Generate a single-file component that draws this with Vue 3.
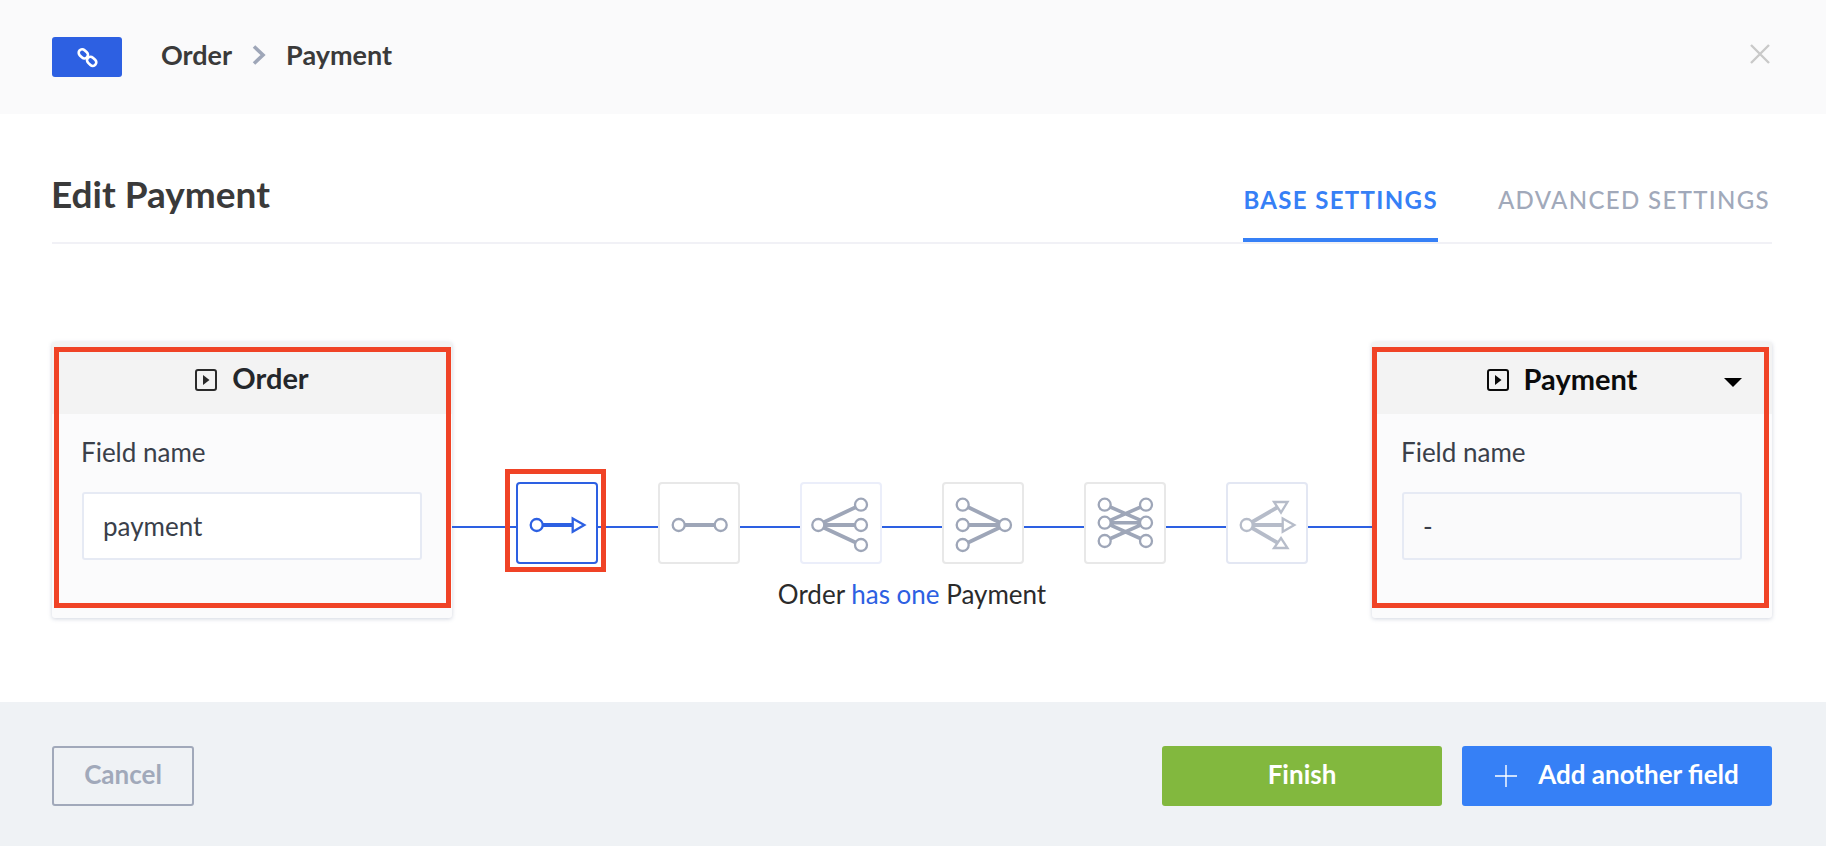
<script setup>
const leftRows = [22.7, 43, 63]
</script>

<template>
  <div class="page">
    <header class="top">
      <div class="badge">
        <svg width="21" height="21" viewBox="0 0 24 24" fill="none" stroke="#fff" stroke-width="3">
          <rect x="1.5" y="3.8" width="11.5" height="8" rx="4" transform="rotate(42 7.2 7.8)" />
          <rect x="11" y="12.4" width="11.5" height="8" rx="4" transform="rotate(42 16.8 16.4)" />
        </svg>
      </div>
      <span class="crumb">Order</span>
      <svg class="chev" width="14" height="20" viewBox="0 0 14 20" fill="none" stroke="#9ea6b8" stroke-width="3.6">
        <path d="M2 1.5 11 10 2 18.5" />
      </svg>
      <span class="crumb">Payment</span>
      <svg class="close" width="20" height="20" viewBox="0 0 20 20" stroke="#c9c9c9" stroke-width="2.4">
        <path d="M1 1 19 19M19 1 1 19" />
      </svg>
    </header>

    <main class="main">
      <div class="title-row">
        <h1>Edit Payment</h1>
        <nav class="tabs">
          <span class="tab active">BASE SETTINGS</span>
          <span class="tab">ADVANCED SETTINGS</span>
        </nav>
      </div>

      <div class="diagram">
        <section class="card">
          <div class="card-head">
            <svg width="22" height="22" viewBox="0 0 22 22">
              <rect x="1" y="1" width="20" height="20" rx="2" fill="none" stroke="#2b2b2b" stroke-width="2" />
              <path d="M8 6 14.5 11 8 16Z" fill="#2b2b2b" />
            </svg>
            <span class="card-name raised">Order</span>
          </div>
          <div class="card-body">
            <div class="label">Field name</div>
            <div class="input">payment</div>
          </div>
          <i class="mark mark-left"></i>
        </section>

        <div class="middle">
          <div class="nodes">
            <div class="node selected">
              <svg width="78" height="78" viewBox="2 2 78 78" fill="none">
                <path d="M27 43H57" stroke="#2d60e2" stroke-width="4" />
                <circle cx="20.7" cy="43" r="6" fill="#fff" stroke="#2d60e2" stroke-width="2.3" />
                <path d="M56.7 36.5 68.3 43 56.7 49.7Z" fill="#fff" stroke="#2d60e2" stroke-width="2.3" />
              </svg>
              <i class="mark mark-node"></i>
            </div>

            <div class="node grey">
              <svg width="78" height="78" viewBox="2 2 78 78" fill="none">
                <path d="M26 43H57" stroke="#9ea6b8" stroke-width="4" />
                <circle cx="20.7" cy="43" r="6" fill="#fff" stroke="#9ea6b8" stroke-width="2.3" />
                <circle cx="62.7" cy="43" r="6" fill="#fff" stroke="#9ea6b8" stroke-width="2.3" />
              </svg>
            </div>

            <div class="node tint">
              <svg width="78" height="78" viewBox="2 2 78 78" fill="none">
                <path d="M18 43 61 22.7M18 43H61M18 43 61 63" stroke="#9ea6b8" stroke-width="3.8" />
                <circle cx="18.3" cy="43" r="6" fill="#fff" stroke="#9ea6b8" stroke-width="2.3" />
                <circle v-for="y in leftRows" :key="y" cx="61" :cy="y" r="6" fill="#fff" stroke="#9ea6b8" stroke-width="2.3" />
              </svg>
            </div>

            <div class="node grey">
              <svg width="78" height="78" viewBox="2 2 78 78" fill="none">
                <path d="M21 22.7 63 43M21 43H63M21 63 63 43" stroke="#9ea6b8" stroke-width="3.8" />
                <circle v-for="y in leftRows" :key="y" cx="20.7" :cy="y" r="6" fill="#fff" stroke="#9ea6b8" stroke-width="2.3" />
                <circle cx="63" cy="43" r="6" fill="#fff" stroke="#9ea6b8" stroke-width="2.3" />
              </svg>
            </div>

            <div class="node grey">
              <svg width="78" height="78" viewBox="2 2 78 78" fill="none">
                <path d="M21 22.7 62 40.7M21 40.7H62M21 59 62 40.7M21 40.7 62 22.7M21 40.7 62 59" stroke="#9ea6b8" stroke-width="3.6" />
                <circle v-for="y in [22.7, 40.7, 59]" :key="y" cx="20.7" :cy="y" r="6" fill="#fff" stroke="#9ea6b8" stroke-width="2.3" />
                <circle v-for="y in [22.7, 40.7, 59]" :key="y" cx="62" :cy="y" r="6" fill="#fff" stroke="#9ea6b8" stroke-width="2.3" />
              </svg>
            </div>

            <div class="node tint-dark">
              <svg width="78" height="78" viewBox="2 2 78 78" fill="none" opacity="0.75">
                <path d="M21 43 52 25M21 43H58M21 43 52 61" stroke="#9ea6b8" stroke-width="3.8" />
                <circle cx="20.7" cy="43" r="6" fill="#fff" stroke="#9ea6b8" stroke-width="2.3" />
                <path d="M48 20H61.5L55 30.5Z" fill="#fff" stroke="#9ea6b8" stroke-width="2.3" />
                <path d="M56.7 36.5 68.3 43 56.7 49.7Z" fill="#fff" stroke="#9ea6b8" stroke-width="2.3" />
                <path d="M48 66H61.5L55 56Z" fill="#fff" stroke="#9ea6b8" stroke-width="2.3" />
              </svg>
            </div>
          </div>
          <p class="caption">Order <span class="link">has one</span> Payment</p>
        </div>

        <section class="card">
          <div class="card-head payment">
            <svg width="22" height="22" viewBox="0 0 22 22">
              <rect x="1" y="1" width="20" height="20" rx="2" fill="none" stroke="#0b0b0b" stroke-width="2" />
              <path d="M8 6 14.5 11 8 16Z" fill="#0b0b0b" />
            </svg>
            <span class="card-name lifted">Payment</span>
            <i class="caret"></i>
          </div>
          <div class="card-body">
            <div class="label">Field name</div>
            <div class="input disabled">-</div>
          </div>
          <i class="mark mark-right"></i>
        </section>
      </div>
    </main>

    <footer class="bottom">
      <button class="btn cancel"><span class="btn-text">Cancel</span></button>
      <div class="actions">
        <button class="btn finish"><span class="btn-text">Finish</span></button>
        <button class="btn add">
          <svg width="22" height="22" viewBox="0 0 22 22" stroke="#fff" stroke-width="1.4">
            <path d="M11 0V22M0 11H22" />
          </svg>
          <span class="btn-text">Add another field</span>
        </button>
      </div>
    </footer>
  </div>
</template>

<style scoped>
.page {
  width: 1826px;
  height: 846px;
  display: flex;
  flex-direction: column;
  overflow: hidden;
  background: #fff;
  font-family: Lato, "Noto Sans", sans-serif;
  color: #3a3a3a;
}

.top {
  height: 114px;
  flex: none;
  display: flex;
  align-items: center;
  padding: 0 56px 0 52px;
  box-sizing: border-box;
  background: #fafafb;
}
.badge {
  width: 70px;
  height: 40px;
  margin-right: 39px;
  border-radius: 3px;
  background: #2d60e2;
  display: flex;
  align-items: center;
  justify-content: center;
}
.crumb {
  font-size: 27px;
  font-weight: 700;
  margin-bottom: 6px;
}
.chev {
  margin: 0 20px 5px 20px;
}
.close {
  margin-left: auto;
  margin-bottom: 6px;
}

.main {
  flex: 1;
  padding: 0 54px 0 52px;
  min-height: 0;
}
.title-row {
  height: 130px;
  box-sizing: border-box;
  border-bottom: 2px solid #f1f1f6;
  display: flex;
  justify-content: space-between;
}
h1 {
  margin: 0 0 0 -1px;
  padding-top: 57px;
  font-size: 37px;
  line-height: 46px;
  font-weight: 700;
  color: #3a3a3a;
}
.tabs {
  display: flex;
  gap: 60px;
  height: 128px;
  margin-right: 2px;
}
.tab {
  box-sizing: border-box;
  height: 128px;
  padding: 66px 0 0;
  font-size: 24px;
  line-height: 40px;
  font-weight: 500;
  letter-spacing: 1.35px;
  color: #a1a9ba;
}
.tab.active {
  color: #3680f6;
  font-weight: 700;
  border-bottom: 4px solid #3680f6;
}

.diagram {
  margin-top: 98px;
  display: flex;
  width: 1720px;
}
.card {
  position: relative;
  flex: none;
  width: 400px;
  height: 276px;
  border-radius: 3px;
  background: #fbfbfc;
  box-shadow: 0 1px 4px rgba(90, 105, 140, 0.28);
}
.card-head {
  height: 72px;
  background: #f3f3f3;
  border-radius: 3px 3px 0 0;
  display: flex;
  align-items: center;
  justify-content: center;
  gap: 15px;
  position: relative;
  padding-top: 4px;
  box-sizing: border-box;
  color: #24272b;
}
.card-name {
  font-size: 29px;
  font-weight: 700;
}
.raised {
  margin-bottom: 5px;
}
.lifted {
  margin-bottom: 3px;
}
.payment {
  color: #0b0b0b;
  padding-right: 20px;
}
.caret {
  position: absolute;
  right: 30px;
  top: 36px;
  border-left: 9px solid transparent;
  border-right: 9px solid transparent;
  border-top: 9px solid #000;
}
.card-body {
  padding: 22px 30px 0;
}
.label {
  font-size: 26px;
  line-height: 32px;
  color: #3a3f4a;
  margin-left: -1px;
}
.input {
  margin-top: 24px;
  width: 340px;
  height: 68px;
  box-sizing: border-box;
  padding-left: 19px;
  border: 2px solid #e6eaf4;
  border-radius: 3px;
  background: #fff;
  font-size: 26px;
  line-height: 64px;
  color: #3a3f4a;
}
.input.disabled {
  background: #fafafb;
}

.mark {
  position: absolute;
  box-sizing: border-box;
  border: 5px solid #f04326;
  pointer-events: none;
}
.mark-left {
  left: 2px;
  top: 5px;
  width: 397px;
  height: 261px;
}
.mark-right {
  left: 0;
  top: 5px;
  width: 397px;
  height: 261px;
}
.mark-node {
  left: -13px;
  top: -15px;
  width: 101px;
  height: 103px;
}

.middle {
  position: relative;
  flex: 1;
  padding-top: 140px;
}
.middle::before {
  content: "";
  position: absolute;
  left: 0;
  right: 0;
  top: 184px;
  height: 2px;
  background: #2d60e2;
}
.nodes {
  position: relative;
  display: flex;
  justify-content: center;
  gap: 60px;
}
.node {
  position: relative;
  width: 82px;
  height: 82px;
  box-sizing: border-box;
  border: 2px solid #e8e8e8;
  border-radius: 4px;
  background: #fff;
}
.node svg {
  display: block;
}
.node.selected {
  border-color: #2d60e2;
}
.node.tint {
  border-color: #ebeefa;
}
.node.tint-dark {
  border-color: #e3e7f3;
}
.caption {
  margin: 12px 0 0;
  text-align: center;
  font-size: 26px;
  line-height: 36px;
  color: #2b2b2b;
}
.link {
  color: #2d60e2;
}

.bottom {
  height: 144px;
  flex: none;
  box-sizing: border-box;
  padding: 44px 54px 0 52px;
  background: #eff2f5;
  display: flex;
  justify-content: space-between;
  align-items: flex-start;
}
.actions {
  display: flex;
  gap: 20px;
}
.btn {
  height: 60px;
  border: 0;
  border-radius: 3px;
  font-family: inherit;
  font-size: 26px;
  font-weight: 700;
  color: #fff;
  padding: 0;
}
.btn-text {
  position: relative;
  top: -2px;
}
.cancel {
  width: 142px;
  border: 2px solid #a1a9ba;
  background: transparent;
  color: #a1a9ba;
}
.finish {
  width: 280px;
  background: #82b83e;
}
.add {
  width: 310px;
  background: #3680f6;
  display: flex;
  align-items: center;
  justify-content: center;
  gap: 21px;
}
</style>
